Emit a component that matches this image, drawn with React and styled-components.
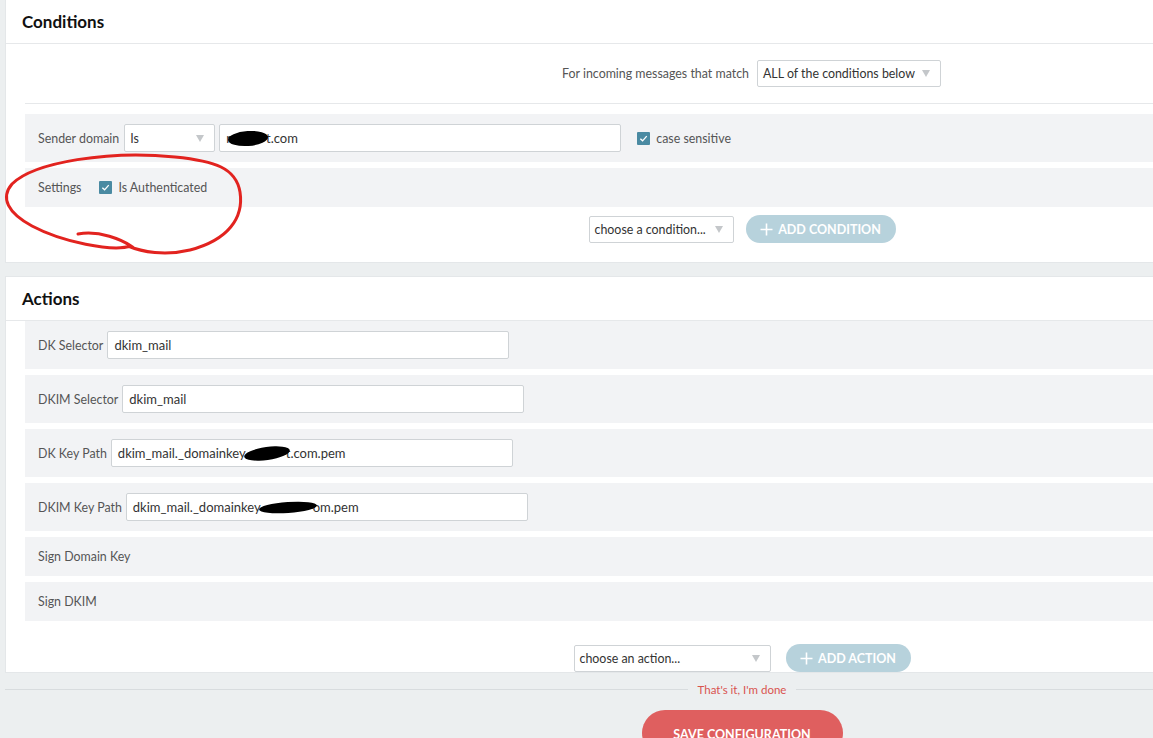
import React from "react";
import styled, { createGlobalStyle } from "styled-components";

const Global = createGlobalStyle`
  html, body { margin: 0; padding: 0; overflow: hidden; background: #eceff0; }
  body { font-family: Lato, "Open Sans", Arial, sans-serif; font-size: 12.4px; color: #555; }
  * { box-sizing: border-box; }
`;

const Page = styled.div`
  position: relative;
  width: 1484px;
  height: 738px;
  padding: 0 5px;
  display: flex;
  flex-direction: column;
`;

const Card = styled.section`
  background: #fff;
  border: 1px solid #e4e7e9;
  border-top: ${(p) => (p.$flushTop ? "none" : "1px solid #e4e7e9")};
  display: flex;
  flex-direction: column;
  padding-bottom: ${(p) => p.$pb}px;
  margin-bottom: ${(p) => p.$mb || 0}px;
`;

const CardHeader = styled.h2`
  margin: 0;
  height: ${(p) => p.$h}px;
  display: flex;
  align-items: center;
  padding-left: 16px;
  font-size: 17px;
  font-weight: 700;
  color: #111;
  border-bottom: 1px solid #e6e8ea;
`;

const MatchRow = styled.div`
  margin-left: 19px;
  height: 60px;
  display: flex;
  align-items: center;
  justify-content: center;
  gap: 8px;
  border-bottom: 1px solid #e6e8ea;
  color: #444;
`;

const Rows = styled.div`
  display: flex;
  flex-direction: column;
  gap: 6px;
  padding-left: 19px;
  margin-top: ${(p) => p.$mt || 0}px;
`;

const Row = styled.div`
  background: #f2f3f5;
  height: ${(p) => (p.$tall ? 48 : 39)}px;
  display: flex;
  align-items: center;
  padding-left: 13px;
  gap: ${(p) => p.$gap || 4}px;
  color: #555;
`;

const Label = styled.span`
  color: #555;
  white-space: nowrap;
  margin-right: ${(p) => p.$mr || 0}px;
`;

const Field = styled.div`
  width: ${(p) => p.$w}px;
  height: 28px;
  background: #fff;
  border: 1px solid #cfd3d6;
  border-radius: 2px;
  display: flex;
  align-items: center;
  padding-left: 6px;
  color: #333;
  font-size: 13px;
  white-space: nowrap;
  overflow: hidden;
`;

const SelectBox = styled.div`
  width: ${(p) => p.$w}px;
  height: ${(p) => p.$h || 27}px;
  background: #fff;
  border: 1px solid #cfd3d6;
  border-radius: 2px;
  display: flex;
  align-items: center;
  justify-content: space-between;
  padding: 0 10px 0 5px;
  color: #333;
  white-space: nowrap;
`;

const Caret = styled.span`
  width: 0;
  height: 0;
  border-left: 4px solid transparent;
  border-right: 4px solid transparent;
  border-top: 7px solid #c4c7ca;
`;

const Check = styled.span`
  width: 13px;
  height: 13px;
  background: #4a8aa2;
  border-radius: 1px;
  display: inline-flex;
  align-items: center;
  justify-content: center;
  margin-right: 6px;
`;

const CheckLabel = styled.label`
  display: inline-flex;
  align-items: center;
  color: #555;
  margin-left: ${(p) => p.$ml || 0}px;
`;

const Blob = styled.span`
  display: inline-block;
  width: ${(p) => p.$w}px;
  height: ${(p) => p.$h}px;
  background: #000;
  border-radius: 50%;
  margin: 0 ${(p) => p.$mr || 0}px 0 ${(p) => p.$ml || 0}px;
  transform: rotate(${(p) => p.$rot || 0}deg);
`;

const AddRow = styled.div`
  display: flex;
  align-items: center;
  justify-content: center;
  gap: ${(p) => p.$gap}px;
  margin-top: ${(p) => p.$mt}px;
`;

const PillButton = styled.button`
  height: 28px;
  width: ${(p) => p.$w}px;
  border: none;
  border-radius: 14px;
  background: #b7d2dc;
  color: #fff;
  font-family: Lato, Arial, sans-serif;
  font-size: 12.5px;
  font-weight: 700;
  display: flex;
  align-items: center;
  justify-content: center;
  gap: 5px;
  padding: 0;
`;

const Footer = styled.div`
  display: flex;
  flex-direction: column;
  align-items: center;
  padding-top: 10px;
`;

const DoneLine = styled.div`
  width: 100%;
  display: flex;
  align-items: center;
  gap: 10px;
  color: #d9534f;
  font-size: 11.5px;
  &::before, &::after {
    content: "";
    flex: 1;
    height: 1px;
    background: #d8dcde;
  }
`;

const SaveButton = styled.button`
  margin-top: 14px;
  width: 201px;
  height: 46px;
  border: none;
  border-radius: 23px;
  background: #df5f5f;
  color: #fff;
  font-family: Lato, Arial, sans-serif;
  font-size: 12.5px;
  font-weight: 700;
  padding-top: 4px;
`;

const Annotation = styled.svg`
  position: absolute;
  left: 0;
  top: 140px;
  pointer-events: none;
`;

const CheckIcon = () => (
  <svg width="9" height="9" viewBox="0 0 10 10">
    <path d="M1.5 5.2 L4 7.6 L8.6 2.4" fill="none" stroke="#fff" strokeWidth="1.5" />
  </svg>
);

const Plus = () => (
  <svg width="13" height="13" viewBox="0 0 13 13">
    <path d="M6.5 0.5 V12.5 M0.5 6.5 H12.5" stroke="#fff" strokeWidth="1.6" />
  </svg>
);

export default function App() {
  return (
    <>
      <Global />
      <Page>
        <Card $flushTop $pb={19} $mb={13}>
          <CardHeader $h={44}>Conditions</CardHeader>
          <MatchRow>
            <Label>For incoming messages that match</Label>
            <SelectBox $w={184}>
              ALL of the conditions below <Caret />
            </SelectBox>
          </MatchRow>
          <Rows $mt={10}>
            <Row $tall>
              <Label $mr={1}>Sender domain</Label>
              <SelectBox $w={91} $h={28}>
                Is <Caret />
              </SelectBox>
              <Field $w={402}>
                r<Blob $w={40} $h={15} $ml={-3} $mr={-2} $rot={-4} />t.com
              </Field>
              <CheckLabel $ml={12}>
                <Check>
                  <CheckIcon />
                </Check>
                case sensitive
              </CheckLabel>
            </Row>
            <Row $gap={18}>
              <Label>Settings</Label>
              <CheckLabel>
                <Check>
                  <CheckIcon />
                </Check>
                Is Authenticated
              </CheckLabel>
            </Row>
          </Rows>
          <AddRow $gap={12} $mt={8}>
            <SelectBox $w={145}>
              choose a condition... <Caret />
            </SelectBox>
            <PillButton $w={150}>
              <Plus /> ADD CONDITION
            </PillButton>
          </AddRow>
        </Card>

        <Card $pb={0}>
          <CardHeader $h={44}>Actions</CardHeader>
          <Rows>
            <Row $tall>
              <Label>DK Selector</Label>
              <Field $w={402}>dkim_mail</Field>
            </Row>
            <Row $tall>
              <Label>DKIM Selector</Label>
              <Field $w={402}>dkim_mail</Field>
            </Row>
            <Row $tall>
              <Label>DK Key Path</Label>
              <Field $w={402}>
                dkim_mail._domainkey
                <Blob $w={46} $h={13} $ml={-2} $mr={-4} $rot={-8} />
                t.com.pem
              </Field>
            </Row>
            <Row $tall>
              <Label>DKIM Key Path</Label>
              <Field $w={402}>
                dkim_mail._domainkey
                <Blob $w={58} $h={11} $ml={-2} $mr={-4} $rot={-4} />
                om.pem
              </Field>
            </Row>
            <Row>
              <Label>Sign Domain Key</Label>
            </Row>
            <Row>
              <Label>Sign DKIM</Label>
            </Row>
          </Rows>
          <AddRow $gap={15} $mt={23}>
            <SelectBox $w={197}>
              choose an action... <Caret />
            </SelectBox>
            <PillButton $w={125}>
              <Plus /> ADD ACTION
            </PillButton>
          </AddRow>
        </Card>

        <Footer>
          <DoneLine>That's it, I'm done</DoneLine>
          <SaveButton>SAVE CONFIGURATION</SaveButton>
        </Footer>

        <Annotation width="260" height="130" viewBox="0 140 260 130">
          <path
            d="M78 234 C 100 230, 122 240, 131 246 C 112 252, 62 242, 32 226 C 8 213, 0 198, 12 184 C 34 162, 110 150, 175 157 C 215 161, 236 168, 240 192 C 244 218, 228 240, 190 250 C 165 256, 142 252, 128 246"
            fill="none"
            stroke="#e2231f"
            strokeWidth="3"
            strokeLinecap="round"
          />
        </Annotation>
      </Page>
    </>
  );
}
